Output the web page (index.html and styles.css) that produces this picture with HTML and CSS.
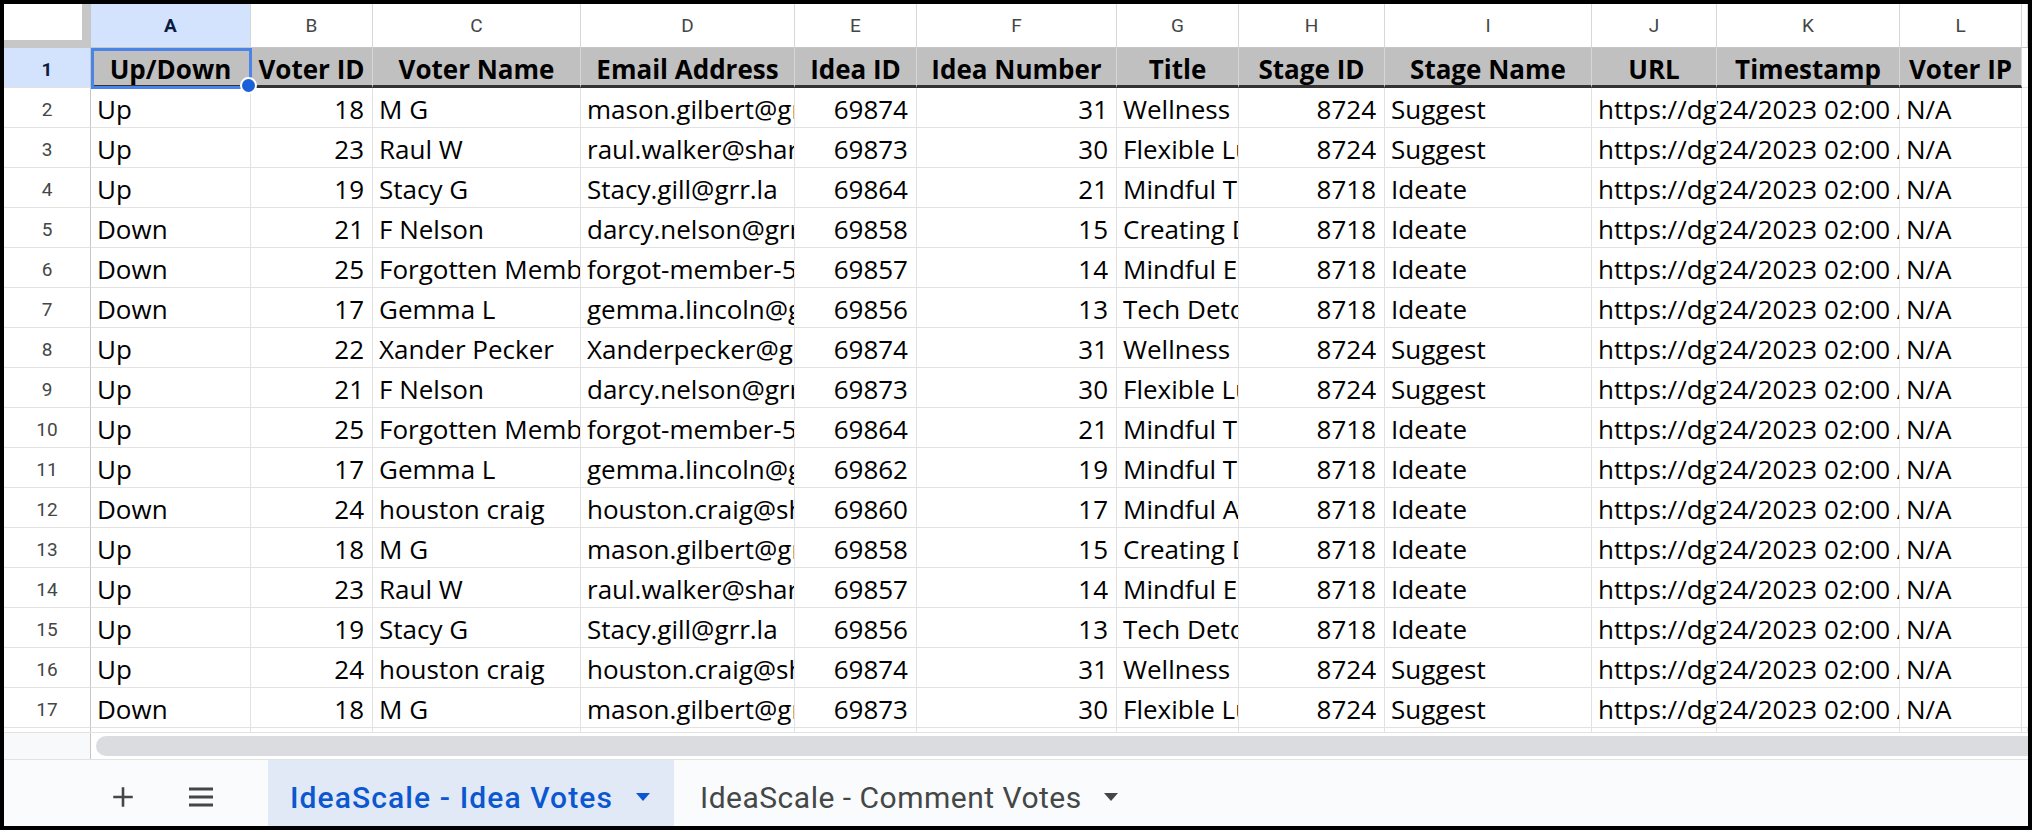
FILE: index.html
```html
<!DOCTYPE html>
<html lang="en">
<head>
    <meta charset="UTF-8">
    <title>IdeaScale - Idea Votes</title>
    <link rel="stylesheet" href="styles.css">
</head>
<body>

<div class="frame">
    <div class="sheet">
        <!-- column letters -->
        <div class="row cols">
            <div class="corner"></div>
            <div class="col sel">A</div>
            <div class="col">B</div>
            <div class="col">C</div>
            <div class="col">D</div>
            <div class="col">E</div>
            <div class="col">F</div>
            <div class="col">G</div>
            <div class="col">H</div>
            <div class="col">I</div>
            <div class="col">J</div>
            <div class="col">K</div>
            <div class="col">L</div>
            <div class="col"></div>
        </div>

        <!-- header row, A1 is selected -->
        <div class="row head">
            <div class="rh sel">1</div>
            <div class="c">Up/Down</div>
            <div class="c">Voter ID</div>
            <div class="c">Voter Name</div>
            <div class="c">Email Address</div>
            <div class="c">Idea ID</div>
            <div class="c">Idea Number</div>
            <div class="c">Title</div>
            <div class="c">Stage ID</div>
            <div class="c">Stage Name</div>
            <div class="c">URL</div>
            <div class="c">Timestamp</div>
            <div class="c">Voter IP</div>
            <div class="c blank"></div>
            <div class="selection"><span class="handle"></span></div>
        </div>

        <div class="row">
            <div class="rh">2</div>
            <div class="c">Up</div><div class="c n">18</div><div class="c">M G</div>
            <div class="c">mason.gilbert@gmail.com</div><div class="c n">69874</div><div class="c n">31</div>
            <div class="c">Wellness</div><div class="c n">8724</div><div class="c">Suggest</div>
            <div class="c">https://dgm.ideascale.com/c/idea/69874</div>
            <div class="c t"><span>05/24/2023 02:00 AM</span></div><div class="c">N/A</div><div class="c"></div>
        </div>
        <div class="row">
            <div class="rh">3</div>
            <div class="c">Up</div><div class="c n">23</div><div class="c">Raul W</div>
            <div class="c">raul.walker@sharklasers.com</div><div class="c n">69873</div><div class="c n">30</div>
            <div class="c">Flexible Lunch Hours</div><div class="c n">8724</div><div class="c">Suggest</div>
            <div class="c">https://dgm.ideascale.com/c/idea/69873</div>
            <div class="c t"><span>05/24/2023 02:00 AM</span></div><div class="c">N/A</div><div class="c"></div>
        </div>
        <div class="row">
            <div class="rh">4</div>
            <div class="c">Up</div><div class="c n">19</div><div class="c">Stacy G</div>
            <div class="c">Stacy.gill@grr.la</div><div class="c n">69864</div><div class="c n">21</div>
            <div class="c">Mindful Tech Breaks</div><div class="c n">8718</div><div class="c">Ideate</div>
            <div class="c">https://dgm.ideascale.com/c/idea/69864</div>
            <div class="c t"><span>05/24/2023 02:00 AM</span></div><div class="c">N/A</div><div class="c"></div>
        </div>
        <div class="row">
            <div class="rh">5</div>
            <div class="c">Down</div><div class="c n">21</div><div class="c">F Nelson</div>
            <div class="c">darcy.nelson@grr.la</div><div class="c n">69858</div><div class="c n">15</div>
            <div class="c">Creating Digital Detox Zones</div><div class="c n">8718</div><div class="c">Ideate</div>
            <div class="c">https://dgm.ideascale.com/c/idea/69858</div>
            <div class="c t"><span>05/24/2023 02:00 AM</span></div><div class="c">N/A</div><div class="c"></div>
        </div>
        <div class="row">
            <div class="rh">6</div>
            <div class="c">Down</div><div class="c n">25</div><div class="c">Forgotten Member</div>
            <div class="c">forgot-member-5@ideascale.com</div><div class="c n">69857</div><div class="c n">14</div>
            <div class="c">Mindful Eating Workshops</div><div class="c n">8718</div><div class="c">Ideate</div>
            <div class="c">https://dgm.ideascale.com/c/idea/69857</div>
            <div class="c t"><span>05/24/2023 02:00 AM</span></div><div class="c">N/A</div><div class="c"></div>
        </div>
        <div class="row">
            <div class="rh">7</div>
            <div class="c">Down</div><div class="c n">17</div><div class="c">Gemma L</div>
            <div class="c">gemma.lincoln@gmail.com</div><div class="c n">69856</div><div class="c n">13</div>
            <div class="c">Tech Detox Challenge</div><div class="c n">8718</div><div class="c">Ideate</div>
            <div class="c">https://dgm.ideascale.com/c/idea/69856</div>
            <div class="c t"><span>05/24/2023 02:00 AM</span></div><div class="c">N/A</div><div class="c"></div>
        </div>
        <div class="row">
            <div class="rh">8</div>
            <div class="c">Up</div><div class="c n">22</div><div class="c">Xander Pecker</div>
            <div class="c">Xanderpecker@gmail.com</div><div class="c n">69874</div><div class="c n">31</div>
            <div class="c">Wellness</div><div class="c n">8724</div><div class="c">Suggest</div>
            <div class="c">https://dgm.ideascale.com/c/idea/69874</div>
            <div class="c t"><span>05/24/2023 02:00 AM</span></div><div class="c">N/A</div><div class="c"></div>
        </div>
        <div class="row">
            <div class="rh">9</div>
            <div class="c">Up</div><div class="c n">21</div><div class="c">F Nelson</div>
            <div class="c">darcy.nelson@grr.la</div><div class="c n">69873</div><div class="c n">30</div>
            <div class="c">Flexible Lunch Hours</div><div class="c n">8724</div><div class="c">Suggest</div>
            <div class="c">https://dgm.ideascale.com/c/idea/69873</div>
            <div class="c t"><span>05/24/2023 02:00 AM</span></div><div class="c">N/A</div><div class="c"></div>
        </div>
        <div class="row">
            <div class="rh">10</div>
            <div class="c">Up</div><div class="c n">25</div><div class="c">Forgotten Member</div>
            <div class="c">forgot-member-5@ideascale.com</div><div class="c n">69864</div><div class="c n">21</div>
            <div class="c">Mindful Tech Breaks</div><div class="c n">8718</div><div class="c">Ideate</div>
            <div class="c">https://dgm.ideascale.com/c/idea/69864</div>
            <div class="c t"><span>05/24/2023 02:00 AM</span></div><div class="c">N/A</div><div class="c"></div>
        </div>
        <div class="row">
            <div class="rh">11</div>
            <div class="c">Up</div><div class="c n">17</div><div class="c">Gemma L</div>
            <div class="c">gemma.lincoln@gmail.com</div><div class="c n">69862</div><div class="c n">19</div>
            <div class="c">Mindful Tech Use</div><div class="c n">8718</div><div class="c">Ideate</div>
            <div class="c">https://dgm.ideascale.com/c/idea/69862</div>
            <div class="c t"><span>05/24/2023 02:00 AM</span></div><div class="c">N/A</div><div class="c"></div>
        </div>
        <div class="row">
            <div class="rh">12</div>
            <div class="c">Down</div><div class="c n">24</div><div class="c">houston craig</div>
            <div class="c">houston.craig@sharklasers.com</div><div class="c n">69860</div><div class="c n">17</div>
            <div class="c">Mindful Afternoons</div><div class="c n">8718</div><div class="c">Ideate</div>
            <div class="c">https://dgm.ideascale.com/c/idea/69860</div>
            <div class="c t"><span>05/24/2023 02:00 AM</span></div><div class="c">N/A</div><div class="c"></div>
        </div>
        <div class="row">
            <div class="rh">13</div>
            <div class="c">Up</div><div class="c n">18</div><div class="c">M G</div>
            <div class="c">mason.gilbert@gmail.com</div><div class="c n">69858</div><div class="c n">15</div>
            <div class="c">Creating Digital Detox Zones</div><div class="c n">8718</div><div class="c">Ideate</div>
            <div class="c">https://dgm.ideascale.com/c/idea/69858</div>
            <div class="c t"><span>05/24/2023 02:00 AM</span></div><div class="c">N/A</div><div class="c"></div>
        </div>
        <div class="row">
            <div class="rh">14</div>
            <div class="c">Up</div><div class="c n">23</div><div class="c">Raul W</div>
            <div class="c">raul.walker@sharklasers.com</div><div class="c n">69857</div><div class="c n">14</div>
            <div class="c">Mindful Eating Workshops</div><div class="c n">8718</div><div class="c">Ideate</div>
            <div class="c">https://dgm.ideascale.com/c/idea/69857</div>
            <div class="c t"><span>05/24/2023 02:00 AM</span></div><div class="c">N/A</div><div class="c"></div>
        </div>
        <div class="row">
            <div class="rh">15</div>
            <div class="c">Up</div><div class="c n">19</div><div class="c">Stacy G</div>
            <div class="c">Stacy.gill@grr.la</div><div class="c n">69856</div><div class="c n">13</div>
            <div class="c">Tech Detox Challenge</div><div class="c n">8718</div><div class="c">Ideate</div>
            <div class="c">https://dgm.ideascale.com/c/idea/69856</div>
            <div class="c t"><span>05/24/2023 02:00 AM</span></div><div class="c">N/A</div><div class="c"></div>
        </div>
        <div class="row">
            <div class="rh">16</div>
            <div class="c">Up</div><div class="c n">24</div><div class="c">houston craig</div>
            <div class="c">houston.craig@sharklasers.com</div><div class="c n">69874</div><div class="c n">31</div>
            <div class="c">Wellness</div><div class="c n">8724</div><div class="c">Suggest</div>
            <div class="c">https://dgm.ideascale.com/c/idea/69874</div>
            <div class="c t"><span>05/24/2023 02:00 AM</span></div><div class="c">N/A</div><div class="c"></div>
        </div>
        <div class="row">
            <div class="rh">17</div>
            <div class="c">Down</div><div class="c n">18</div><div class="c">M G</div>
            <div class="c">mason.gilbert@gmail.com</div><div class="c n">69873</div><div class="c n">30</div>
            <div class="c">Flexible Lunch Hours</div><div class="c n">8724</div><div class="c">Suggest</div>
            <div class="c">https://dgm.ideascale.com/c/idea/69873</div>
            <div class="c t"><span>05/24/2023 02:00 AM</span></div><div class="c">N/A</div><div class="c"></div>
        </div>

        <!-- top edge of row 18, cut off by the scrollbar -->
        <div class="row tail">
            <div class="rh"></div>
            <div class="c"></div><div class="c"></div><div class="c"></div><div class="c"></div>
            <div class="c"></div><div class="c"></div><div class="c"></div><div class="c"></div>
            <div class="c"></div><div class="c"></div><div class="c"></div><div class="c"></div>
            <div class="c"></div>
        </div>
    </div>

    <div class="hscroll">
        <div class="hscroll-corner"></div>
        <div class="hscroll-track"><div class="hscroll-thumb"></div></div>
    </div>

    <div class="tabs">
        <div class="tab-btn">
            <svg width="26" height="26" viewBox="0 0 24 24"><path d="M12 3v18M3 12h18" stroke="#444746" stroke-width="2.4" fill="none"/></svg>
        </div>
        <div class="tab-btn">
            <svg width="28" height="26" viewBox="0 0 28 26"><path d="M2 5h24M2 13h24M2 21h24" stroke="#444746" stroke-width="2.8" fill="none"/></svg>
        </div>
        <div class="tab on">
            <span>IdeaScale - Idea Votes</span>
            <span class="caret"></span>
        </div>
        <div class="tab">
            <span>IdeaScale - Comment Votes</span>
            <span class="caret"></span>
        </div>
    </div>
</div>

</body>
</html>
```

FILE: styles.css
```css
* {
    box-sizing: border-box;
}
body {
    margin: 0;
    background-color: #fff;
}
.frame {
    width: 2032px;
    height: 830px;
    border: 4px solid #000;
    display: flex;
    flex-direction: column;
    overflow: hidden;
    background-color: #fff;
}
.sheet {
    flex: none;
}
.row {
    display: grid;
    grid-template-columns: 87px 160px 122px 208px 214px 122px 200px 122px 146px 207px 125px 183px 122px 1fr;
    height: 40px;
}

/* column letters */
.cols {
    height: 44px;
}
.corner {
    background-color: #fff;
    border-right: 9px solid #c7c7c7;
    border-bottom: 8px solid #c7c7c7;
}
.col {
    display: flex;
    align-items: center;
    justify-content: center;
    border-right: 1px solid #d7d7d7;
    border-bottom: 1px solid #c4c7c5;
    font-family: Roboto, Arial, sans-serif;
    font-size: 19px;
    color: #444746;
}
.col.sel,
.rh.sel {
    background-color: #d3e3fd;
    color: #0a1d3f;
    font-weight: 700;
}

/* row numbers */
.rh {
    display: flex;
    align-items: center;
    justify-content: center;
    padding-top: 4px;
    border-right: 1px solid #c4c7c5;
    border-bottom: 1px solid #e2e2e2;
    font-family: Roboto, Arial, sans-serif;
    font-size: 19px;
    color: #444746;
}

/* cells */
.c {
    display: flex;
    align-items: flex-end;
    padding: 0 6px;
    border-right: 1px solid #e2e2e2;
    border-bottom: 1px solid #e2e2e2;
    overflow: hidden;
    white-space: nowrap;
    font-family: "Open Sans", "Liberation Sans", sans-serif;
    font-size: 26px;
    color: #000;
}
.c.n {
    justify-content: flex-end;
    padding-right: 8px;
}
/* centred timestamp, clipped on both sides */
.c.t {
    justify-content: center;
    padding: 0;
}
.c.t span {
    flex: none;
}

/* header row */
.head {
    position: relative;
}
.head .c {
    justify-content: center;
    padding-bottom: 0;
    line-height: 1.25;
    background-color: #c0c0c0;
    border-right-color: #d6d6d6;
    border-bottom: 3px solid #333;
    font-weight: 700;
}
.head .c.blank {
    background-color: #fff;
    border-bottom: 1px solid #e2e2e2;
}
.selection {
    position: absolute;
    left: 87px;
    top: 0;
    width: 161px;
    height: 41px;
    border: 3px solid #4a84e8;
    z-index: 2;
}
.handle {
    position: absolute;
    right: -8px;
    bottom: -8px;
    width: 17px;
    height: 17px;
    border-radius: 50%;
    background-color: #1b5fd9;
    border: 2px solid #fff;
}

.tail {
    height: 4px;
}
.tail .c,
.tail .rh {
    border-bottom: none;
    padding: 0;
}

/* horizontal scrollbar */
.hscroll {
    display: grid;
    grid-template-columns: 87px 1fr;
    height: 27px;
    border-top: 1px solid #e2e2e2;
}
.hscroll-corner {
    background-color: #f8f9fa;
    border-right: 1px solid #c4c7c5;
}
.hscroll-track {
    padding: 3px 0 3px 5px;
}
.hscroll-thumb {
    height: 100%;
    background-color: #dadce0;
    border-radius: 10px 0 0 10px;
}

/* sheet tabs */
.tabs {
    flex: 1;
    display: flex;
    align-items: stretch;
    padding-left: 104px;
    background-color: #f9fbfd;
    border-top: 1px solid #e1e3e1;
    font-family: Roboto, Arial, sans-serif;
    font-size: 30px;
    letter-spacing: 0.5px;
    color: #444746;
}
.tab-btn {
    width: 30px;
    display: flex;
    align-items: center;
    justify-content: center;
    padding-top: 8px;
    margin-right: 48px;
}
.tab-btn + .tab-btn {
    margin-right: 52px;
}
.tab {
    display: flex;
    align-items: center;
    padding: 8px 0 0 26px;
}
.tab.on {
    width: 406px;
    padding: 8px 24px 0 22px;
    justify-content: space-between;
    background-color: #e1e9f7;
    color: #0b57d0;
    font-weight: 500;
    letter-spacing: 1.1px;
}
.caret {
    width: 0;
    height: 0;
    margin-left: 22px;
    border-left: 7px solid transparent;
    border-right: 7px solid transparent;
    border-top: 8px solid #444746;
}
.tab.on .caret {
    border-top-color: #0b57d0;
}
```
